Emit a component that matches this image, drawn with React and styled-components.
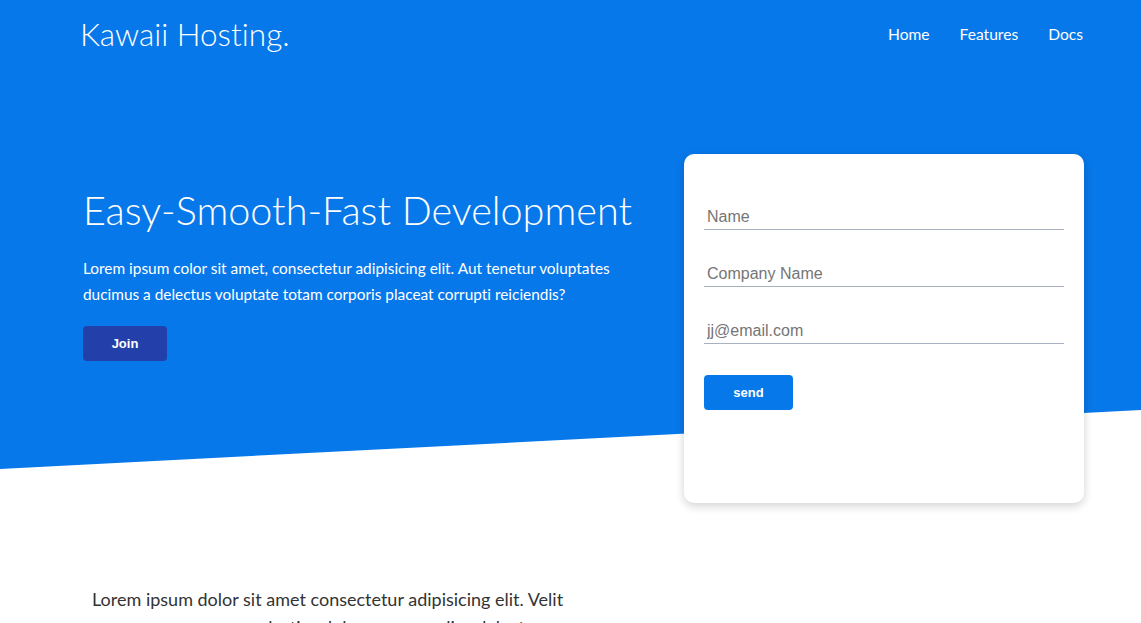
import React from 'react';
import styled, { createGlobalStyle } from 'styled-components';

const GlobalStyle = createGlobalStyle`
    * {
        box-sizing: border-box;
    }
    body {
        margin: 0;
        font-family: Lato, "Open Sans", sans-serif;
        font-variant-ligatures: no-common-ligatures;
        background: #ffffff;
        overflow: hidden;
    }
`;

function App() {
    return (
        <>
            <GlobalStyle />
            <TopShape>
                <Header>
                    <Logo>Kawaii Hosting.</Logo>
                    <Nav>
                        <NavLink href="#">Home</NavLink>
                        <NavLink href="#">Features</NavLink>
                        <NavLink href="#">Docs</NavLink>
                    </Nav>
                </Header>

                <Hero>
                    <HeroText>
                        <Title>Easy-Smooth-Fast Development</Title>
                        <Lead>
                            Lorem ipsum color sit amet, consectetur adipisicing elit. Aut tenetur voluptates
                            ducimus a delectus voluptate totam corporis placeat corrupti reiciendis?
                        </Lead>
                        <Button $dark>Join</Button>
                    </HeroText>

                    <Card>
                        <Form onSubmit={(e) => e.preventDefault()}>
                            <Input type="text" placeholder="Name" />
                            <Input type="text" placeholder="Company Name" />
                            <Input type="email" placeholder="jj@email.com" />
                            <Button type="submit">send</Button>
                        </Form>
                    </Card>
                </Hero>
            </TopShape>

            <Section>
                <SectionText>
                    Lorem ipsum dolor sit amet consectetur adipisicing elit. Velit
                    nemo rerum saepe molestias dolorem, quas alias delectus officiis
                    nesciunt architecto fugit, dicta itaque tempore.
                </SectionText>
            </Section>
        </>
    );
}

const TopShape = styled.div`
    position: relative;
    isolation: isolate;

    &::before {
        content: '';
        position: absolute;
        top: 0;
        left: 0;
        right: 0;
        height: 469px;
        background: #0778ea;
        clip-path: polygon(0 0, 100% 0, 100% 410px, 0 100%);
        z-index: -1;
    }
`;

const Header = styled.header`
    display: flex;
    justify-content: space-between;
    align-items: center;
    height: 68px;
    padding: 0 58px 0 80px;
`;

const Logo = styled.h1`
    margin: 0;
    font-size: 31.5px;
    font-weight: 300;
    color: #ffffff;
`;

const Nav = styled.nav`
    display: flex;
    gap: 30px;
`;

const NavLink = styled.a`
    font-size: 15.6px;
    color: #ffffff;
    text-decoration: none;
`;

const Hero = styled.div`
    display: flex;
    justify-content: space-between;
    padding: 86px 57px 0 83px;
`;

const HeroText = styled.div`
    padding-top: 32px;
    width: 560px;
`;

const Title = styled.h2`
    margin: 0 0 21px;
    font-size: 39.6px;
    font-weight: 300;
    line-height: 1.2;
    color: #ffffff;
`;

const Lead = styled.p`
    margin: 0 0 19px;
    font-size: 15.4px;
    line-height: 26px;
    color: #ffffff;
`;

const Button = styled.button`
    display: block;
    width: ${(props) => (props.$dark ? '84px' : '89px')};
    height: 35px;
    border: none;
    border-radius: 4px;
    background: ${(props) => (props.$dark ? '#233fa9' : '#0778ea')};
    color: #ffffff;
    font-family: "Liberation Sans", Arial, sans-serif;
    font-size: 13px;
    font-weight: 700;
    cursor: pointer;
`;

const Card = styled.div`
    width: 400px;
    height: 349px;
    padding: 46px 20px 0;
    background: #ffffff;
    border-radius: 10px;
    box-shadow: 0 3px 10px rgba(0, 0, 0, 0.18);
`;

const Form = styled.form`
    display: flex;
    flex-direction: column;
    gap: 27px;

    & > button {
        margin-top: 4px;
    }
`;

const Input = styled.input`
    width: 100%;
    height: 30px;
    padding: 5px 3px 0;
    border: none;
    border-bottom: 1px solid #a7b1bf;
    outline: none;
    font-family: "Liberation Sans", Arial, sans-serif;
    font-size: 16px;
    color: #333333;

    &::placeholder {
        color: #757575;
    }
`;

const Section = styled.section`
    padding: 82px 0 0 92px;
`;

const SectionText = styled.p`
    margin: 0;
    width: 480px;
    font-size: 18px;
    line-height: 28px;
    color: #333333;
`;

export default App;
